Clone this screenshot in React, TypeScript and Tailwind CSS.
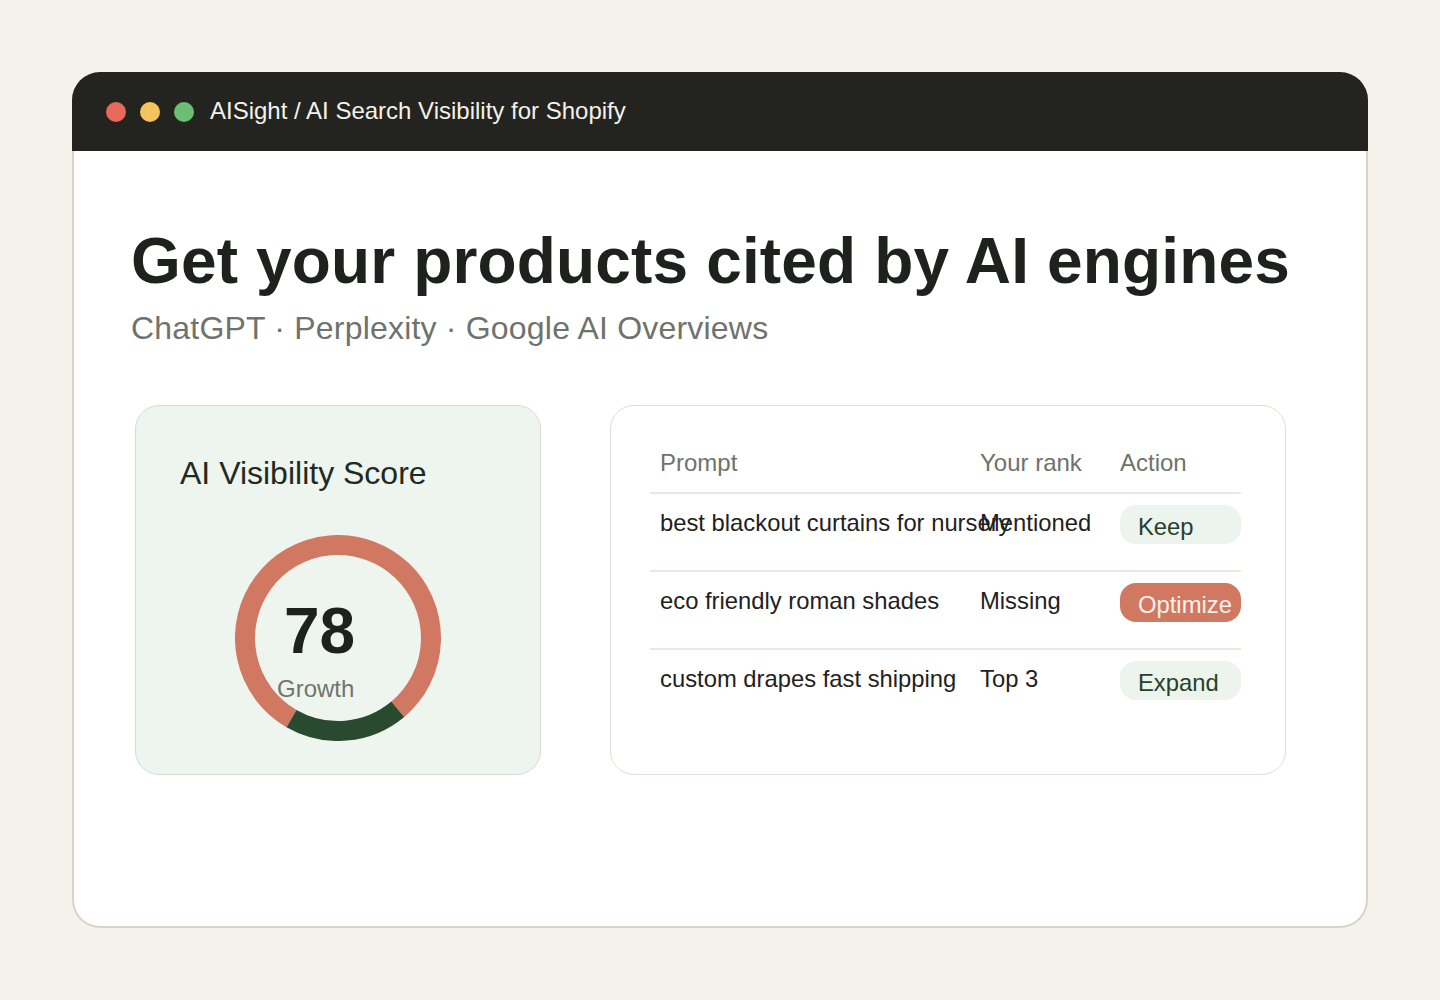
import React from 'react';

type Row = {
  prompt: string;
  rank: string;
  action: string;
  tone: 'soft' | 'hot';
};

const rows: Row[] = [
  { prompt: 'best blackout curtains for nursery', rank: 'Mentioned', action: 'Keep', tone: 'soft' },
  { prompt: 'eco friendly roman shades', rank: 'Missing', action: 'Optimize', tone: 'hot' },
  { prompt: 'custom drapes fast shipping', rank: 'Top 3', action: 'Expand', tone: 'soft' },
];

const ScoreRing: React.FC = () => (
  <div className="relative h-[206px] w-[206px]">
    <svg width="206" height="206" viewBox="0 0 206 206" className="block">
      <path
        d="M 56.5 183.54 A 93 93 0 1 1 162.78 174.24"
        fill="none"
        stroke="#d07862"
        strokeWidth="20"
      />
      <path
        d="M 162.78 174.24 A 93 93 0 0 1 56.5 183.54"
        fill="none"
        stroke="#2a4a2f"
        strokeWidth="20"
      />
    </svg>
    <div className="absolute left-[42px] top-[64px] flex flex-col">
      <div className="pl-[7px] text-[64px] font-bold leading-[64px] text-[#1f211d]">78</div>
      <div className="mt-[12px] text-[24px] leading-[28px] text-[#6f756e]">Growth</div>
    </div>
  </div>
);

const App: React.FC = () => {
  return (
    <div
      className="min-h-[1000px] w-full bg-[#f5f1eb] pt-[72px] px-[72px]"
      style={{ fontFamily: '"Liberation Sans", Arial, sans-serif' }}
    >
      <div className="w-[1296px]">
        {/* title bar */}
        <div className="flex h-[79px] items-center rounded-t-[28px] bg-[#23241f] pl-[34px]">
          <div className="flex items-center gap-[14px]">
            <span className="h-[20px] w-[20px] rounded-full bg-[#e8685a]" />
            <span className="h-[20px] w-[20px] rounded-full bg-[#f3c35e]" />
            <span className="h-[20px] w-[20px] rounded-full bg-[#6cbe74]" />
          </div>
          <span className="ml-[16px] -mt-[2px] text-[24px] leading-[28px] text-[#f4f1ea]">
            AISight / AI Search Visibility for Shopify
          </span>
        </div>

        {/* body */}
        <div className="h-[777px] rounded-b-[28px] border-x-2 border-b-2 border-[#d9d2c7] bg-white pl-[57px] pt-[78px]">
          <h1 className="text-[64px] font-bold leading-[64px] tracking-[0.15px] text-[#1f211d]">
            Get your products cited by AI engines
          </h1>
          <p className="mt-[16px] text-[32px] leading-[38px] tracking-[0.2px] text-[#6f736c]">
            ChatGPT · Perplexity · Google AI Overviews
          </p>

          <div className="ml-[4px] mt-[58px] flex gap-[69px]">
            {/* score card */}
            <div className="flex h-[370px] w-[406px] flex-col rounded-[24px] border border-[#d6ddd6] bg-[#eef4ee] pl-[44px] pt-[48px]">
              <div className="text-[32px] leading-[38px] text-[#1f2b22]">AI Visibility Score</div>
              <div className="mt-[43px] -ml-[44px] flex justify-center">
                <ScoreRing />
              </div>
            </div>

            {/* prompts table */}
            <div className="h-[370px] w-[676px] rounded-[24px] border border-[#e2ddd5] bg-white pl-[39px] pr-[44px] pt-[43px]">
              <div className="flex h-[45px] border-b-2 border-[#ebe7e0] text-[24px] leading-[28px] text-[#6f726c]">
                <div className="w-[320px] pl-[10px]">Prompt</div>
                <div className="w-[140px] pl-[10px]">Your rank</div>
                <div className="flex-1 pl-[10px]">Action</div>
              </div>
              {rows.map((row, i) => (
                <div
                  key={row.prompt}
                  className={
                    i < rows.length - 1
                      ? 'flex h-[78px] border-b-2 border-[#ebe7e0]'
                      : 'flex h-[78px]'
                  }
                >
                  <div className="w-[320px] whitespace-nowrap pl-[10px] pt-[15px] text-[23.8px] leading-[28px] text-[#1f211d]">
                    {row.prompt}
                  </div>
                  <div className="w-[140px] whitespace-nowrap pl-[10px] pt-[15px] text-[23.8px] leading-[28px] text-[#1f211d]">
                    {row.rank}
                  </div>
                  <div className="flex-1 pl-[10px] pt-[11px]">
                    <div
                      className={
                        row.tone === 'hot'
                          ? 'h-[39px] rounded-[16px] bg-[#d07862] pl-[18px] pt-[8px] text-[23.8px] leading-[28px] text-[#fdf1ea] whitespace-nowrap'
                          : 'h-[39px] rounded-[16px] bg-[#edf4ee] pl-[18px] pt-[8px] text-[23.8px] leading-[28px] text-[#27402c] whitespace-nowrap'
                      }
                    >
                      {row.action}
                    </div>
                  </div>
                </div>
              ))}
            </div>
          </div>
        </div>
      </div>
    </div>
  );
};

export default App;
